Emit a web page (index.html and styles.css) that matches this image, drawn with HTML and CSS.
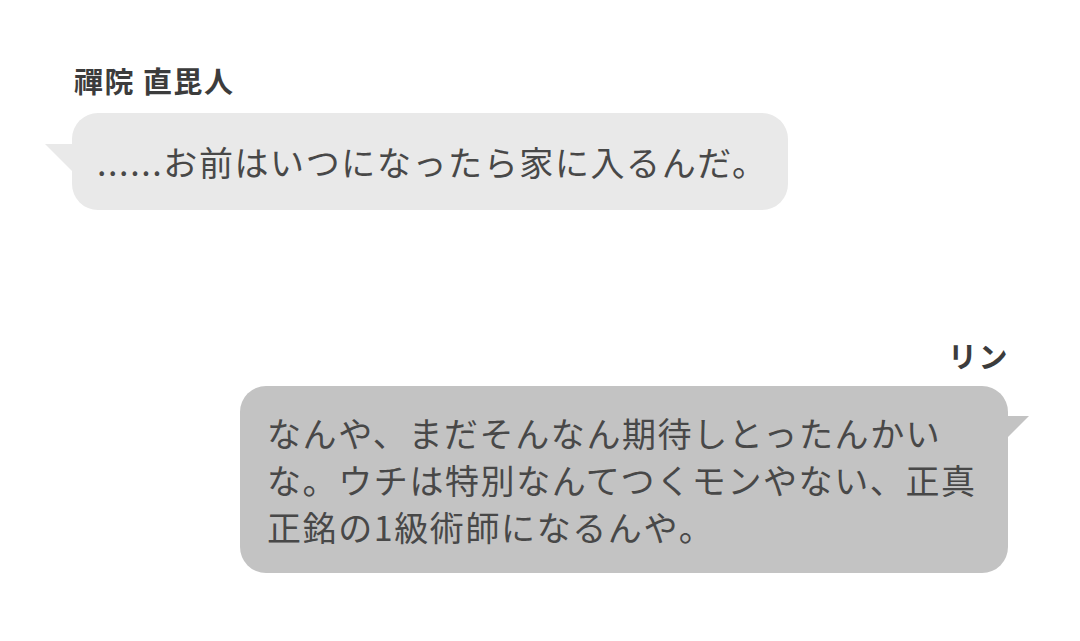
FILE: index.html
```html
<!DOCTYPE html>
<html lang="ja">
<head>
<meta charset="utf-8">
<link rel="stylesheet" href="styles.css">
</head>
<body>
<main class="chat">
  <section class="msg msg-left">
    <div class="name">禪院 直毘人</div>
    <div class="bubble bubble-left">......お前はいつになったら家に入るんだ。</div>
  </section>
  <section class="msg msg-right">
    <div class="name">リン</div>
    <div class="bubble bubble-right">なんや、まだそんなん期待しとったんかいな。ウチは特別なんてつくモンやない、正真正銘の1級術師になるんや。</div>
  </section>
</main>
</body>
</html>
```
FILE: styles.css
```css
html, body {
  margin: 0;
  padding: 0;
  background: #ffffff;
}
body {
  width: 1080px;
  height: 641px;
  overflow: hidden;
  font-family: "Noto Sans CJK JP", "Noto Sans", sans-serif;
  color: #484848;
}
.chat {
  padding: 60px 72px 0 72px;
  display: flex;
  flex-direction: column;
}
.msg {
  display: flex;
  flex-direction: column;
}
.msg-left {
  align-items: flex-start;
}
.msg-right {
  align-items: flex-end;
  margin-top: 125px;
}
.name {
  font-size: 29px;
  line-height: 40px;
  font-weight: 700;
  letter-spacing: 1.5px;
  color: #3c3c3c;
}
.msg-left .name {
  margin-bottom: 13px;
  padding-left: 2px;
}
.msg-right .name {
  margin-bottom: 11px;
  margin-right: -1px;
}
.bubble {
  position: relative;
  font-size: 34px;
  line-height: 47px;
  letter-spacing: 1.6px;
  border-radius: 26px;
  box-sizing: border-box;
}
.bubble::before {
  content: "";
  position: absolute;
  width: 0;
  height: 0;
}
.bubble-left {
  background: #e9e9e9;
  padding: 25px 20px 25px 25px;
}
.bubble-left::before {
  left: -27px;
  top: 31px;
  border-top: 34px solid #e9e9e9;
  border-left: 34px solid transparent;
}
.bubble-right {
  background: #c3c3c3;
  width: 768px;
  padding: 23px 25px 23px 27px;
}
.bubble-right::before {
  right: -21px;
  top: 30px;
  border-top: 30px solid #c3c3c3;
  border-right: 30px solid transparent;
}
```
